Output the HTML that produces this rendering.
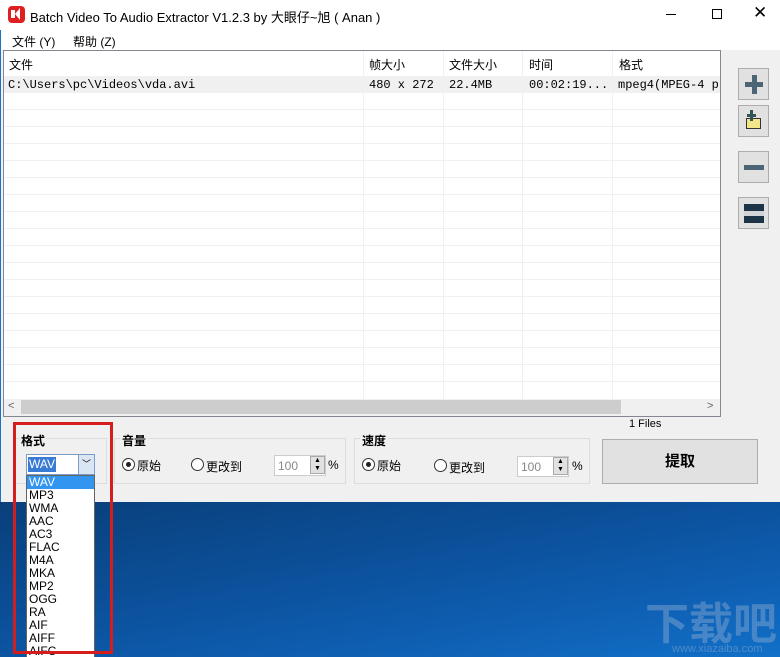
<!DOCTYPE html>
<html><head><meta charset="utf-8"><style>
*{margin:0;padding:0;box-sizing:border-box}
body{width:780px;height:657px;overflow:hidden;position:relative;background:#f0f0f0;font-family:"Liberation Sans","Noto Sans CJK SC",sans-serif;font-size:12px;color:#000}
.abs{position:absolute}
.desk{left:0;top:502px;width:780px;height:155px;background:linear-gradient(170deg,#0a3f7a 0%,#0b4f98 40%,#0e5db0 70%,#1170c8 100%)}
.list{left:3px;top:50px;width:718px;height:367px;background:#fff;border:1px solid #828790}
.mono{font-family:"Liberation Mono","Noto Sans CJK SC",monospace;font-size:12px}
.btn{width:31px;height:32px;background:#e1e1e1;border:1px solid #adadad;left:738px}
.item{height:13px;line-height:13px;padding-left:2px}
</style></head><body>
<!-- desktop -->
<div class="abs desk"></div>
<div class="abs" style="left:645px;top:602px;font-size:44px;font-weight:bold;color:rgba(140,170,210,0.45);line-height:46px;white-space:nowrap">下载吧</div>
<div class="abs" style="left:672px;top:643px;font-size:11px;color:rgba(140,170,210,0.5);white-space:nowrap">www.xiazaiba.com</div>
<!-- title -->
<div class="abs" style="left:0;top:0;width:780px;height:30px;background:#fff"></div>
<div class="abs" style="left:8px;top:6px;width:17px;height:17px;background:#e02020;border-radius:4px"></div>
<div class="abs" style="left:11px;top:10px;width:4px;height:8px;background:#fff"></div>
<div class="abs" style="left:15px;top:8px;width:0;height:0;border-top:6px solid transparent;border-bottom:6px solid transparent;border-right:5px solid #fff"></div>
<div class="abs" style="left:30px;top:7px;font-size:13px">Batch Video To Audio Extractor V1.2.3 by 大眼仔~旭 ( Anan )</div>
<div class="abs" style="left:666px;top:14px;width:10px;height:1px;background:#000"></div>
<div class="abs" style="left:712px;top:9px;width:10px;height:10px;border:1px solid #000"></div>
<div class="abs" style="left:753px;top:4px;font-size:17px;line-height:17px">✕</div>
<!-- menu -->
<div class="abs" style="left:0;top:30px;width:780px;height:20px;background:#fff"></div>
<div class="abs" style="left:12px;top:33px">文件 (Y)</div>
<div class="abs" style="left:73px;top:33px">帮助 (Z)</div>
<div class="abs" style="left:0;top:30px;width:1px;height:472px;background:#1a73c8"></div>
<!-- list -->
<div class="abs list">
 <div class="abs" style="left:0;top:25px;width:716px;height:17px;background:#f0f0f0"></div>
 <svg class="abs" style="left:0;top:0" width="716" height="348">
  <g stroke="#f0f0f0" stroke-width="1">
   <line x1="359.5" y1="0" x2="359.5" y2="348"/><line x1="439.5" y1="0" x2="439.5" y2="348"/><line x1="518.5" y1="0" x2="518.5" y2="348"/><line x1="608.5" y1="0" x2="608.5" y2="348"/>
   <line x1="0" y1="58.5" x2="716" y2="58.5"/><line x1="0" y1="75.5" x2="716" y2="75.5"/><line x1="0" y1="92.5" x2="716" y2="92.5"/><line x1="0" y1="109.5" x2="716" y2="109.5"/><line x1="0" y1="126.5" x2="716" y2="126.5"/><line x1="0" y1="143.5" x2="716" y2="143.5"/><line x1="0" y1="160.5" x2="716" y2="160.5"/><line x1="0" y1="177.5" x2="716" y2="177.5"/><line x1="0" y1="194.5" x2="716" y2="194.5"/><line x1="0" y1="211.5" x2="716" y2="211.5"/><line x1="0" y1="228.5" x2="716" y2="228.5"/><line x1="0" y1="245.5" x2="716" y2="245.5"/><line x1="0" y1="262.5" x2="716" y2="262.5"/><line x1="0" y1="279.5" x2="716" y2="279.5"/><line x1="0" y1="296.5" x2="716" y2="296.5"/><line x1="0" y1="313.5" x2="716" y2="313.5"/><line x1="0" y1="330.5" x2="716" y2="330.5"/>
  </g>
 </svg>
 <div class="abs" style="left:5px;top:5px">文件</div>
 <div class="abs" style="left:365px;top:5px">帧大小</div>
 <div class="abs" style="left:445px;top:5px">文件大小</div>
 <div class="abs" style="left:525px;top:5px">时间</div>
 <div class="abs" style="left:615px;top:5px">格式</div>
 <div class="abs mono" style="left:4px;top:27px">C:\Users\pc\Videos\vda.avi</div>
 <div class="abs mono" style="left:365px;top:27px">480 x 272</div>
 <div class="abs mono" style="left:445px;top:27px">22.4MB</div>
 <div class="abs mono" style="left:525px;top:27px">00:02:19...</div>
 <div class="abs mono" style="left:614px;top:27px;white-space:nowrap;width:102px;overflow:hidden">mpeg4(MPEG-4 p</div>
 <div class="abs" style="left:0;top:348px;width:716px;height:17px;background:#f0f0f0"></div>
 <div class="abs" style="left:17px;top:349px;width:600px;height:14px;background:#cdcdcd"></div>
 <div class="abs" style="left:4px;top:349px;color:#606060;font-size:11px">&lt;</div>
 <div class="abs" style="left:703px;top:349px;color:#606060;font-size:11px">&gt;</div>
</div>
<!-- side buttons -->
<div class="abs btn" style="top:68px"><div class="abs" style="left:6px;top:13px;width:18px;height:5px;background:#4b6577"></div><div class="abs" style="left:13px;top:6px;width:5px;height:19px;background:#4b6577"></div></div>
<div class="abs btn" style="top:105px"><div class="abs" style="left:7px;top:12px;width:15px;height:11px;background:#f2e58a;border:1px solid #333"></div><div class="abs" style="left:8px;top:8px;width:9px;height:3px;background:#355"></div><div class="abs" style="left:11px;top:4px;width:3px;height:11px;background:#355"></div></div>
<div class="abs btn" style="top:151px"><div class="abs" style="left:5px;top:13px;width:20px;height:5px;background:#4b6577"></div></div>
<div class="abs btn" style="top:197px"><div class="abs" style="left:5px;top:6px;width:20px;height:19px;background:#1d3347"></div><div class="abs" style="left:5px;top:13px;width:20px;height:5px;background:#d0d4d8"></div></div>
<!-- groups -->
<div class="abs" style="left:14px;top:438px;width:93px;height:46px;border:1px solid #dcdcdc"></div>
<div class="abs" style="left:20px;top:432px;font-weight:bold;background:#f0f0f0;padding:0 1px">格式</div>
<div class="abs" style="left:114px;top:438px;width:232px;height:46px;border:1px solid #dcdcdc"></div>
<div class="abs" style="left:120px;top:432px;font-weight:bold;background:#f0f0f0;padding:0 2px">音量</div>
<div class="abs" style="left:354px;top:438px;width:236px;height:46px;border:1px solid #dcdcdc"></div>
<div class="abs" style="left:360px;top:432px;font-weight:bold;background:#f0f0f0;padding:0 2px">速度</div>
<!-- volume -->
<div class="abs" style="left:122px;top:458px;width:13px;height:13px;border:1px solid #333;border-radius:50%;background:#fff"><div class="abs" style="left:3px;top:3px;width:5px;height:5px;border-radius:50%;background:#222"></div></div>
<div class="abs" style="left:137px;top:457px">原始</div>
<div class="abs" style="left:191px;top:458px;width:13px;height:13px;border:1px solid #333;border-radius:50%;background:#fff"></div>
<div class="abs" style="left:206px;top:458px">更改到</div>
<div class="abs" style="left:274px;top:455px;width:52px;height:21px;background:#fff;border:1px solid #ccc;color:#888;padding:3px 0 0 3px">100</div>
<div class="abs" style="left:310px;top:456px;width:15px;height:18px;background:#e1e1e1;border:1px solid #aaa;font-size:7px;line-height:8px;text-align:center">▲<br>▼</div>
<div class="abs" style="left:328px;top:458px">%</div>
<!-- speed -->
<div class="abs" style="left:362px;top:458px;width:13px;height:13px;border:1px solid #333;border-radius:50%;background:#fff"><div class="abs" style="left:3px;top:3px;width:5px;height:5px;border-radius:50%;background:#222"></div></div>
<div class="abs" style="left:377px;top:457px">原始</div>
<div class="abs" style="left:434px;top:459px;width:13px;height:13px;border:1px solid #333;border-radius:50%;background:#fff"></div>
<div class="abs" style="left:449px;top:459px">更改到</div>
<div class="abs" style="left:517px;top:456px;width:52px;height:21px;background:#fff;border:1px solid #ccc;color:#888;padding:3px 0 0 3px">100</div>
<div class="abs" style="left:553px;top:457px;width:15px;height:18px;background:#e1e1e1;border:1px solid #aaa;font-size:7px;line-height:8px;text-align:center">▲<br>▼</div>
<div class="abs" style="left:572px;top:459px">%</div>
<!-- extract -->
<div class="abs" style="left:629px;top:418px;font-size:11px">1 Files</div>
<div class="abs" style="left:602px;top:439px;width:156px;height:45px;background:#e1e1e1;border:1px solid #adadad;text-align:center;line-height:43px;font-size:15px;font-weight:bold">提取</div>
<!-- combo -->
<div class="abs" style="left:26px;top:454px;width:69px;height:21px;background:#fff;border:1px solid #7a9cc6"></div>
<div class="abs" style="left:28px;top:457px;height:15px;background:#3a7bd5;color:#fff;padding:0 1px;line-height:15px">WAV</div>
<div class="abs" style="left:78px;top:455px;width:16px;height:19px;background:#dbe6f4;border-left:1px solid #7a9cc6;text-align:center;font-size:9px;line-height:19px">﹀</div>
<div class="abs" style="left:26px;top:475px;width:69px;height:182px;background:#fff;border:1px solid #646464;border-bottom:none;font-size:12px;overflow:hidden">
 <div class="item" style="background:#3296f0;color:#fff">WAV</div><div class="item">MP3</div><div class="item">WMA</div><div class="item">AAC</div><div class="item">AC3</div><div class="item">FLAC</div><div class="item">M4A</div><div class="item">MKA</div><div class="item">MP2</div><div class="item">OGG</div><div class="item">RA</div><div class="item">AIF</div><div class="item">AIFF</div><div class="item">AIFC</div>
</div>
<div class="abs" style="left:13px;top:422px;width:100px;height:232px;border:3px solid #d51d1d"></div>
</body></html>
